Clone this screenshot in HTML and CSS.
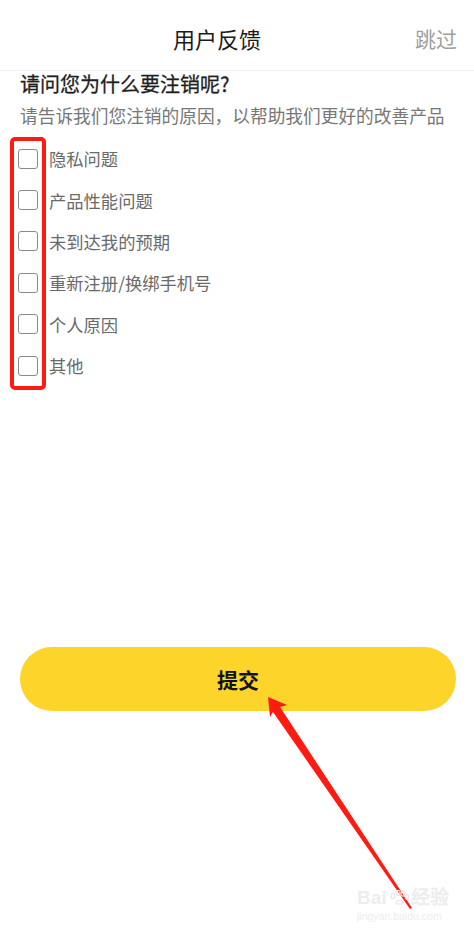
FILE: index.html
```html
<!DOCTYPE html>
<html lang="zh-CN">
<head>
    <meta charset="UTF-8">
    <meta name="viewport" content="width=device-width, initial-scale=1.0">
    <title>用户反馈</title>
    <link rel="stylesheet" href="styles.css">
</head>
<body>

    <!-- Header -->
    <div class="header">
        <span class="header-title">用户反馈</span>
        <span class="header-skip">跳过</span>
    </div>

    <!-- Reasons -->
    <div class="content">
        <h2 class="question">请问您为什么要注销呢?</h2>
        <p class="hint">请告诉我们您注销的原因，以帮助我们更好的改善产品</p>

        <ul class="reasons">
            <li class="reason"><span class="check"></span>隐私问题</li>
            <li class="reason"><span class="check"></span>产品性能问题</li>
            <li class="reason"><span class="check"></span>未到达我的预期</li>
            <li class="reason"><span class="check"></span>重新注册/换绑手机号</li>
            <li class="reason"><span class="check"></span>个人原因</li>
            <li class="reason"><span class="check"></span>其他</li>
        </ul>

        <button class="submit-btn">提交</button>
    </div>

    <!-- Annotations drawn over the screenshot -->
    <div class="mark-box"></div>

    <svg class="mark-arrow" width="474" height="932" viewBox="0 0 474 932">
        <polygon points="268,697 287,705 280,707 412,908 410,909 273,712 270,717" fill="#ff1a12"/>
    </svg>

    <div class="watermark">
        <div class="wm-logo">Bai<svg width="22" height="16" viewBox="0 0 22 16"><g fill="none" stroke="#e6e6e6" stroke-width="1.2"><ellipse cx="5" cy="6" rx="2" ry="2.6"/><ellipse cx="10" cy="3" rx="2" ry="2.6"/><ellipse cx="15" cy="3.5" rx="2" ry="2.6"/><ellipse cx="19" cy="7" rx="1.8" ry="2.3"/><path d="M8 14 C8 9 15 9 15 14 Z"/></g></svg>经验</div>
        <div class="wm-url">jingyan.baidu.com</div>
    </div>

</body>
</html>
```

FILE: styles.css
```css
body {
    font-family: "Noto Sans CJK SC", "Noto Sans", sans-serif;
    background-color: #fff;
    margin: 0;
    padding: 0;
    width: 474px;
    height: 932px;
    position: relative;
    overflow: hidden;
}

.header {
    height: 70px;
    border-bottom: 1px solid #f3f3f3;
    display: flex;
    align-items: center;
    justify-content: center;
    position: relative;
}

.header-title {
    font-size: 22px;
    color: #1a1a1a;
    line-height: 30px;
    margin-top: 6px;
    margin-right: 40px;
}

.header-skip {
    position: absolute;
    right: 17px;
    top: 23px;
    font-size: 21px;
    line-height: 30px;
    color: #a0a0a0;
}

.content {
    padding: 0 18px 0 20px;
}

.question {
    margin: 0;
    font-size: 20px;
    font-weight: 400;
    line-height: 26px;
    color: #1e1e1e;
    -webkit-text-stroke: 0.3px #1e1e1e;
}

.hint {
    margin: 6px 0 0;
    font-size: 17.7px;
    line-height: 24px;
    color: #777;
    white-space: nowrap;
}

.reasons {
    list-style: none;
    margin: 11px 0 0;
    padding: 0;
}

.reason {
    height: 41.4px;
    display: flex;
    align-items: center;
    font-size: 17.3px;
    color: #6a6a6a;
}

.check {
    width: 18px;
    height: 18px;
    border: 1.5px solid #8a8a8a;
    border-radius: 3px;
    margin-left: -2px;
    margin-right: 11px;
}

.submit-btn {
    display: block;
    width: 436px;
    height: 64px;
    margin-top: 261px;
    border: none;
    border-radius: 32px;
    background-color: #fcd42a;
    color: #111;
    font-family: inherit;
    font-size: 21px;
    font-weight: 700;
    cursor: pointer;
}

.mark-box {
    position: absolute;
    left: 10px;
    top: 137px;
    width: 28px;
    height: 245px;
    border: 4px solid #ff1a12;
    border-radius: 5px;
}

.mark-arrow {
    position: absolute;
    left: 0;
    top: 0;
}

.watermark {
    position: absolute;
    left: 357px;
    top: 888px;
    color: #ededed;
    font-family: "Liberation Sans", sans-serif;
}

.wm-logo {
    display: flex;
    align-items: center;
    font-size: 19px;
    font-weight: 700;
    line-height: 20px;
}

.wm-logo svg {
    margin: 0 1px;
}

.wm-url {
    font-size: 10.5px;
    line-height: 12px;
    margin-top: 2px;
}
```
